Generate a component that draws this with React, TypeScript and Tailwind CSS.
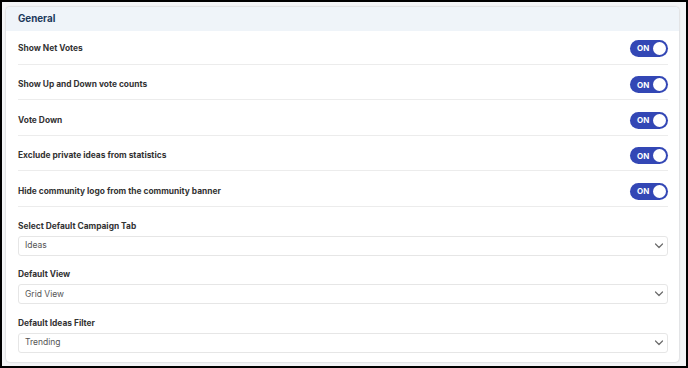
import React from "react";

const toggles = [
  "Show Net Votes",
  "Show Up and Down vote counts",
  "Vote Down",
  "Exclude private ideas from statistics",
  "Hide community logo from the community banner",
];

const selects = [
  { label: "Select Default Campaign Tab", value: "Ideas" },
  { label: "Default View", value: "Grid View" },
  { label: "Default Ideas Filter", value: "Trending" },
];

function Toggle() {
  return (
    <div className="flex h-[17px] w-[38px] items-center justify-between rounded-full bg-[#3347b5] pl-[7px] pr-[2px]">
      <span className="text-[8px] font-bold leading-none text-white">ON</span>
      <span className="h-[13px] w-[13px] rounded-full bg-white" />
    </div>
  );
}

function Chevron() {
  return (
    <svg width="10" height="6" viewBox="0 0 10 6" fill="none">
      <path d="M1.5 1l3.5 3.5 3.5-3.5" stroke="#6b6b6b" strokeWidth="1.2" strokeLinecap="round" strokeLinejoin="round" />
    </svg>
  );
}

export default function App() {
  return (
    <div
      className="h-[368px] w-[688px] overflow-hidden border-2 border-black bg-[#f4f5f7] pl-[4px] pr-[7px] pt-[5px]"
      style={{ fontFamily: "Inter, 'Liberation Sans', sans-serif" }}
    >
      <div className="h-[355px] rounded-[4px] bg-white shadow-[0_0_2px_rgba(0,0,0,0.25)]">
        <div className="flex h-[24px] items-center rounded-t-[4px] bg-[#eff4f9] px-[12px] pt-[1px]">
          <span className="text-[9.8px] font-bold text-[#1d3a5c]">General</span>
        </div>
        <div className="pl-[12px] pr-[11px]">
          {toggles.map((t, i) => (
            <div
              key={i}
              className={`flex items-center justify-between border-b border-[#ececec] ${i === 0 ? "h-[33.5px] pt-[2px]" : "h-[35.5px] pt-[6px]"}`}
            >
              <span className="text-[8.4px] font-bold text-[#333]">{t}</span>
              <Toggle />
            </div>
          ))}
          <div className="flex flex-col pt-[12px]">
            {selects.map((s, i) => (
              <div key={i} className="mb-[11.5px] flex flex-col">
                <span className="mb-[3px] text-[8.4px] font-bold leading-[14px] text-[#333]">{s.label}</span>
                <div className="flex h-[20px] items-center justify-between rounded-[3px] border border-[#e6e6e6] pl-[6px] pr-[3px]">
                  <span className="text-[8.5px] text-[#555]">{s.value}</span>
                  <Chevron />
                </div>
              </div>
            ))}
          </div>
        </div>
      </div>
    </div>
  );
}
